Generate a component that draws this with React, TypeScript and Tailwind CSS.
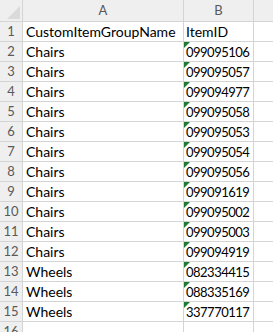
import React from 'react';

const rows: [string, string][] = [
  ['CustomItemGroupName', 'ItemID'],
  ['Chairs', '099095106'],
  ['Chairs', '099095057'],
  ['Chairs', '099094977'],
  ['Chairs', '099095058'],
  ['Chairs', '099095053'],
  ['Chairs', '099095054'],
  ['Chairs', '099095056'],
  ['Chairs', '099091619'],
  ['Chairs', '099095002'],
  ['Chairs', '099095003'],
  ['Chairs', '099094919'],
  ['Wheels', '082334415'],
  ['Wheels', '088335169'],
  ['Wheels', '337770117'],
  ['', ''],
];

const App: React.FC = () => (
  <div className="w-[273px] h-[332px] overflow-hidden bg-white font-['Lato','Noto_Sans',sans-serif]">
    {/* column headers */}
    <div className="flex h-[22px] bg-[#efefef] border-b border-[#d4d4d4] text-[13px] text-[#595959]">
      <div className="relative w-[23px] shrink-0 border-r border-[#d4d4d4]">
        <div className="absolute right-[2px] bottom-[2px] w-0 h-0 border-l-[13px] border-l-transparent border-b-[13px] border-b-[#dadada]" />
      </div>
      <div className="w-[161px] shrink-0 flex items-center justify-center border-r border-[#d4d4d4]">A</div>
      <div className="w-[70px] shrink-0 flex items-center justify-center border-r border-[#d4d4d4]">B</div>
      <div className="flex-1" />
    </div>
    {rows.map(([a, b], i) => (
      <div key={i} className="flex h-[20px] border-b border-[#d4d4d4] text-black">
        <div className="w-[23px] shrink-0 bg-[#efefef] border-r border-[#d4d4d4] text-[13px] text-[#595959] text-center leading-[19px]">{i + 1}</div>
        <div className="w-[161px] shrink-0 border-r border-[#d4d4d4] pl-[3px] text-[14px] leading-[20px] whitespace-nowrap overflow-hidden">{a}</div>
        <div className={`relative w-[70px] shrink-0 border-r border-[#d4d4d4] pl-[2px] leading-[20px] whitespace-nowrap ${i > 0 ? 'text-[13px] tracking-[-0.5px]' : 'text-[14px]'}`}>
          {i > 0 && b && (
            <div className="absolute left-0 top-0 w-0 h-0 border-t-[6px] border-t-[#1e7b34] border-r-[6px] border-r-transparent" />
          )}
          {b}
        </div>
        <div className="flex-1" />
      </div>
    ))}
  </div>
);

export default App;
